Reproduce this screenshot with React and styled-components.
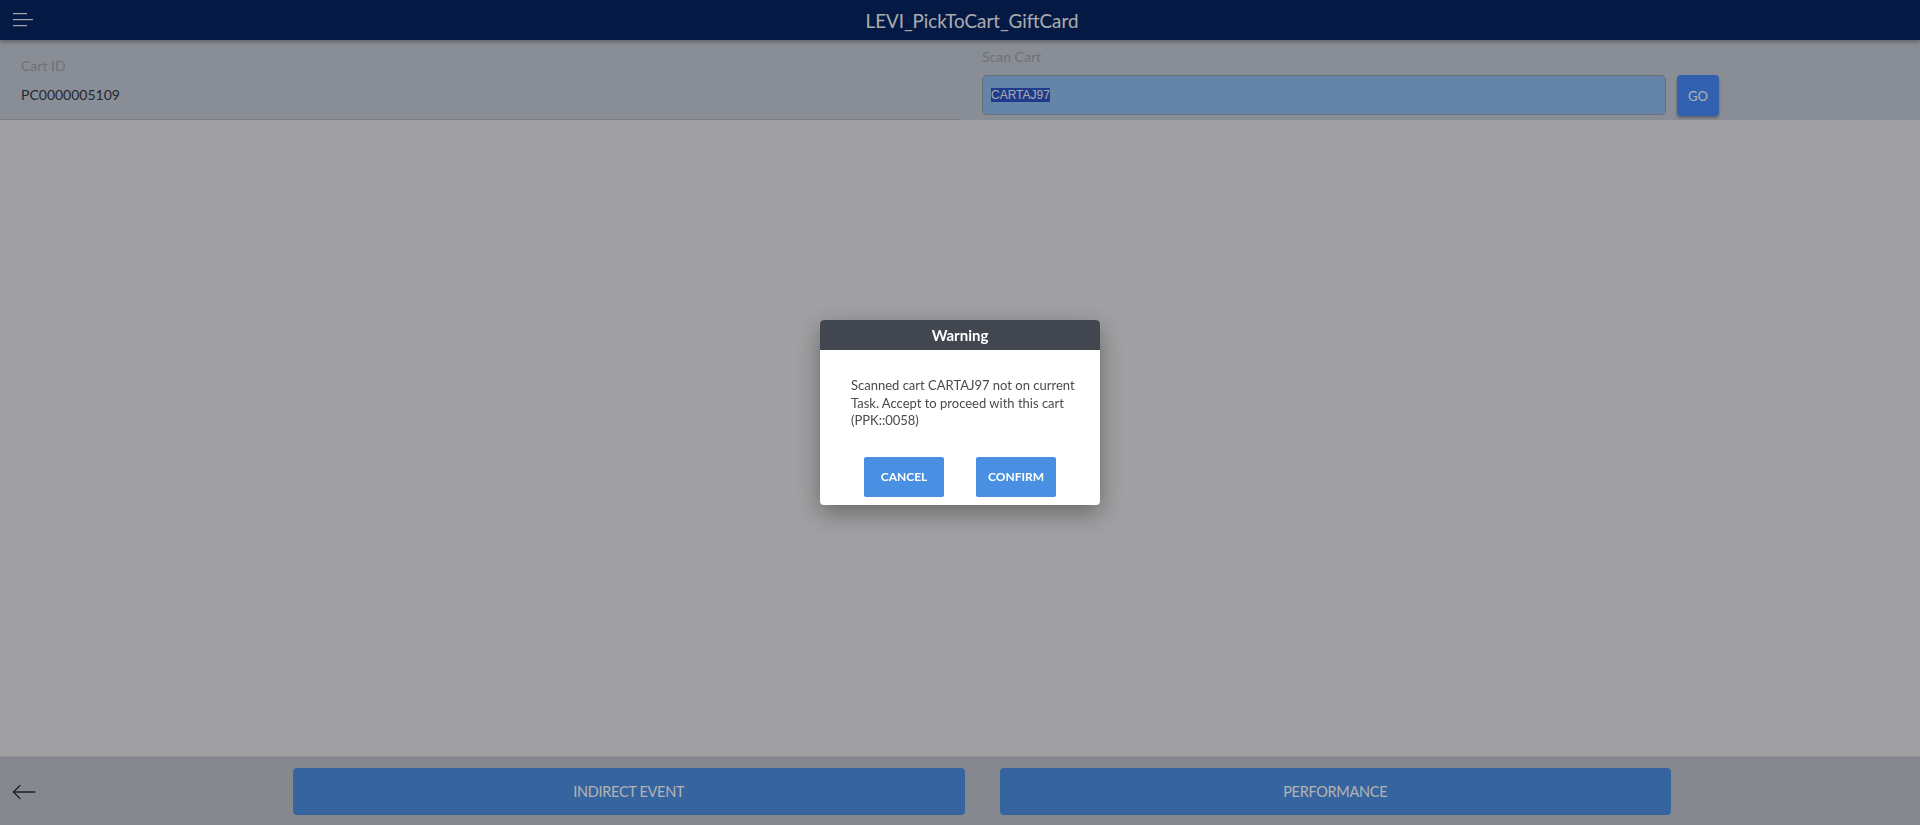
import React from "react";
import styled, { createGlobalStyle } from "styled-components";

const GlobalStyle = createGlobalStyle`
  html, body { margin: 0; padding: 0; height: 100%; }
  body { font-family: Lato, "Noto Sans", sans-serif; background: #e5e5e8; }
  #root { height: 100%; }
  * { box-sizing: border-box; }
`;

const Page = styled.div`
  display: flex;
  flex-direction: column;
  height: 825px;
  background: #e5e5e8;
`;

const Header = styled.header`
  display: flex;
  align-items: center;
  height: 40px;
  background: #062461;
  color: #ffffff;
  box-shadow: 0 2px 4px rgba(0, 0, 0, 0.3);
  position: relative;
  z-index: 1;
`;

const MenuButton = styled.div`
  width: 46px;
  height: 40px;
  padding-left: 13px;
  display: flex;
  align-items: center;
`;

const Title = styled.h1`
  flex: 1;
  margin: 0;
  padding-right: 22px;
  text-align: center;
  font-size: 18.8px;
  font-weight: 400;
  color: #f4f5f8;
`;

const FormSection = styled.section`
  display: flex;
  height: 80px;
  background: #c5cbd6;
`;

const InfoColumn = styled.div`
  width: 960px;
  padding: 17px 21px 0;
  border-bottom: 1px solid #b1b5bf;
`;

const ScanColumn = styled.div`
  flex: 1;
  padding: 8px 201px 0 22px;
`;

const Label = styled.div`
  font-size: 14px;
  line-height: 17px;
  color: #9ea3ac;
`;

const Value = styled.div`
  margin-top: 11px;
  font-size: 14px;
  line-height: 20px;
  color: #333a46;
`;

const ScanRow = styled.div`
  display: flex;
  gap: 11px;
  margin-top: 10px;
`;

const ScanInput = styled.div`
  flex: 1;
  height: 40px;
  display: flex;
  align-items: center;
  padding-left: 8px;
  border: 1px solid #99a0ab;
  border-radius: 5px;
  background: #90bdf1;
  font-family: "Liberation Sans", Arial, sans-serif;
  font-size: 12px;
`;

const Selected = styled.span`
  background: #2c56c8;
  color: #f2f4fa;
  line-height: 14px;
`;

const GoButton = styled.button`
  width: 42px;
  height: 41px;
  border: none;
  border-radius: 4px;
  background: #478cfd;
  color: #ffffff;
  font-family: Lato, sans-serif;
  font-size: 13px;
  box-shadow: 0 2px 3px rgba(0, 0, 0, 0.3);
`;

const Main = styled.main`
  flex: 1;
  background: #e5e5e8;
`;

const BottomBar = styled.footer`
  display: grid;
  grid-template-columns: 258px 1fr 1fr;
  column-gap: 35px;
  align-items: start;
  height: 69px;
  padding: 11px 249px 0 0;
  background: #bfc3cd;
  border-top: 1px solid #d4d4d8;
`;

const BackButton = styled.div`
  display: flex;
  align-items: center;
  height: 47px;
  padding-left: 12px;
  color: #2b2f36;
`;

const ActionButton = styled.button`
  height: 47px;
  border: none;
  border-radius: 4px;
  background: #4d90e2;
  color: #ffffff;
  font-family: Lato, sans-serif;
  font-size: 14.5px;
  letter-spacing: -0.3px;
`;

const Backdrop = styled.div`
  position: fixed;
  inset: 0;
  background: rgba(0, 0, 0, 0.3);
  display: flex;
  align-items: center;
  justify-content: center;
  z-index: 10;
`;

const Dialog = styled.div`
  width: 280px;
  background: #ffffff;
  border-radius: 4px;
  overflow: hidden;
  box-shadow: 0 8px 24px rgba(0, 0, 0, 0.35);
  padding-bottom: 8px;
`;

const DialogHeader = styled.div`
  height: 30px;
  display: flex;
  align-items: center;
  justify-content: center;
  background: #42464f;
  color: #ffffff;
  font-size: 15px;
  font-weight: 700;
`;

const DialogText = styled.p`
  margin: 27px 16px 0 31px;
  font-size: 13px;
  line-height: 17.5px;
  color: #4a4a4a;
  white-space: nowrap;
`;

const DialogActions = styled.div`
  display: flex;
  justify-content: center;
  gap: 32px;
  margin-top: 27px;
`;

const DialogButton = styled.button`
  width: 80px;
  height: 40px;
  border: none;
  border-radius: 2px;
  background: #4a90e2;
  color: #ffffff;
  font-family: Lato, sans-serif;
  font-size: 12px;
  font-weight: 700;
`;

const HamburgerIcon = () => (
  <svg width="22" height="14" viewBox="0 0 22 14">
    <g stroke="#f2f4f8" strokeWidth="1.2">
      <line x1="0" y1="0.6" x2="14" y2="0.6" />
      <line x1="0" y1="6.6" x2="20" y2="6.6" />
      <line x1="0" y1="12.6" x2="14" y2="12.6" />
    </g>
  </svg>
);

const BackArrow = () => (
  <svg width="24" height="16" viewBox="0 0 24 16" fill="none">
    <g stroke="currentColor" strokeWidth="1.3" strokeLinecap="round">
      <line x1="1.5" y1="8" x2="23" y2="8" />
      <polyline points="8,1.5 1.5,8 8,14.5" />
    </g>
  </svg>
);

export default function App() {
  return (
    <>
      <GlobalStyle />
      <Page>
        <Header>
          <MenuButton>
            <HamburgerIcon />
          </MenuButton>
          <Title>LEVI_PickToCart_GiftCard</Title>
        </Header>
        <FormSection>
          <InfoColumn>
            <Label>Cart ID</Label>
            <Value>PC0000005109</Value>
          </InfoColumn>
          <ScanColumn>
            <Label>Scan Cart</Label>
            <ScanRow>
              <ScanInput>
                <Selected>CARTAJ97</Selected>
              </ScanInput>
              <GoButton>GO</GoButton>
            </ScanRow>
          </ScanColumn>
        </FormSection>
        <Main />
        <BottomBar>
          <BackButton>
            <BackArrow />
          </BackButton>
          <ActionButton>INDIRECT EVENT</ActionButton>
          <ActionButton>PERFORMANCE</ActionButton>
        </BottomBar>
      </Page>
      <Backdrop>
        <Dialog>
          <DialogHeader>Warning</DialogHeader>
          <DialogText>
            Scanned cart CARTAJ97 not on current
            <br />
            Task. Accept to proceed with this cart
            <br />
            (PPK::0058)
          </DialogText>
          <DialogActions>
            <DialogButton>CANCEL</DialogButton>
            <DialogButton>CONFIRM</DialogButton>
          </DialogActions>
        </Dialog>
      </Backdrop>
    </>
  );
}
